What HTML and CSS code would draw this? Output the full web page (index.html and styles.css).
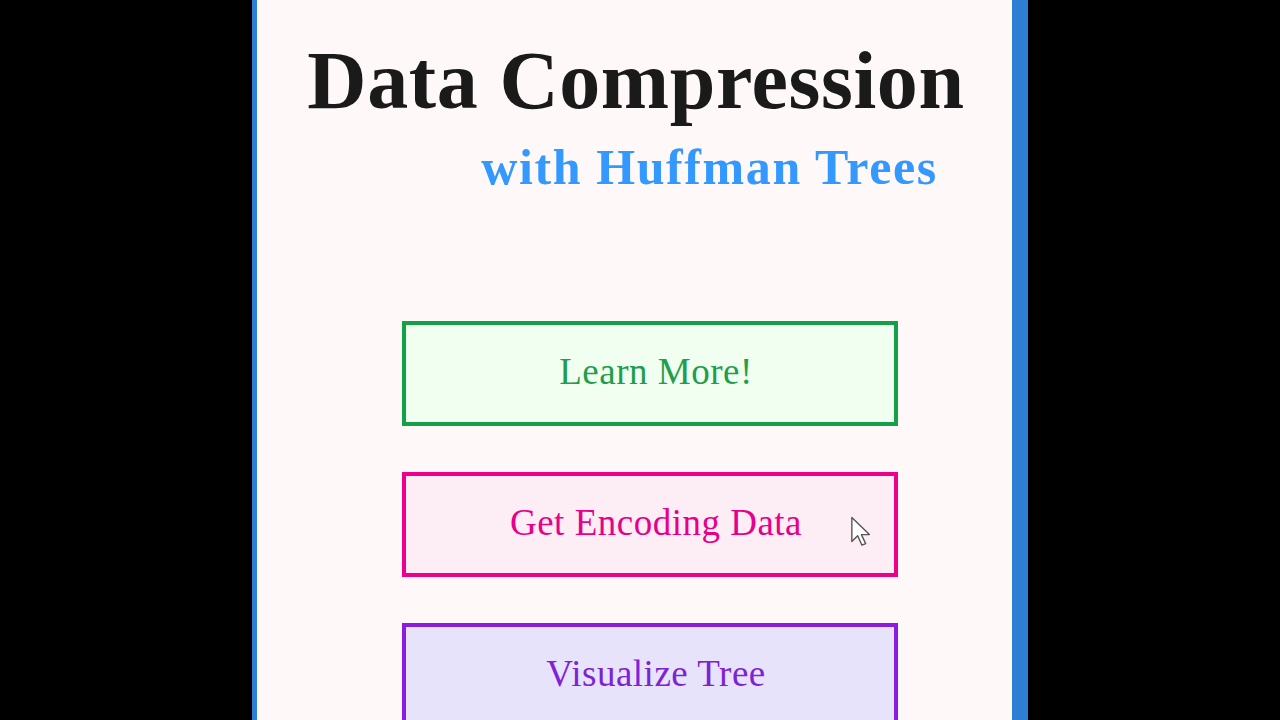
FILE: index.html
```html
<!DOCTYPE html>
<html>
<head>
<meta charset="utf-8">
<link rel="stylesheet" href="styles.css">
</head>
<body>
<div class="panel">
  <h1 class="title">Data Compression</h1>
  <h2 class="subtitle">with Huffman Trees</h2>
  <div class="buttons">
    <div class="btn btn-green">Learn More!</div>
    <div class="btn btn-pink">Get Encoding Data</div>
    <div class="btn btn-purple">Visualize Tree</div>
  </div>
</div>
<svg class="cursor" width="26" height="34" viewBox="0 0 24 32">
  <path d="M1.5 1.5 L1.5 24 L7 18.5 L11 27.5 L14.5 26 L10.5 17.5 L18 17.5 Z" fill="#ffffff" stroke="#555555" stroke-width="1.3" stroke-linejoin="round"/>
</svg>
</body>
</html>
```
FILE: styles.css
```css
html, body {
  margin: 0;
  padding: 0;
  background: #000000;
  height: 720px;
  overflow: hidden;
}
.panel {
  width: 755px;
  margin: 0 auto;
  height: 720px;
  background: #fff8f8;
  border-left: 5px solid #2c7fd3;
  border-right: 16px solid #2c7fd3;
  box-sizing: content-box;
  font-family: "Liberation Serif", "Times New Roman", serif;
}
.title {
  margin: 0;
  padding-top: 36px;
  padding-left: 3px;
  text-align: center;
  font-size: 82px;
  font-weight: bold;
  letter-spacing: 0.6px;
  color: #1a1a1a;
  line-height: 90px;
}
.subtitle {
  margin: 0;
  padding-top: 11px;
  padding-left: 150px;
  text-align: center;
  font-size: 50px;
  font-weight: bold;
  letter-spacing: 1.6px;
  color: #3399ff;
  line-height: 60px;
}
.buttons {
  display: flex;
  flex-direction: column;
  align-items: center;
  gap: 46px;
  padding-top: 124px;
  padding-left: 30px;
}
.btn {
  width: 475px;
  height: 93px;
  display: flex;
  align-items: center;
  justify-content: center;
  font-size: 37px;
  letter-spacing: 0.5px;
  padding-left: 13px;
  padding-bottom: 4px;
  box-sizing: content-box;
}
.btn-green {
  border: 4px solid #14a048;
  background: #f0fff0;
  color: #1f9e4c;
}
.btn-pink {
  border: 4px solid #ec008c;
  background: #fdeef6;
  color: #e6008a;
}
.btn-purple {
  border: 4px solid #8a1be0;
  background: #e6e3fa;
  color: #7f22d6;
}
.cursor {
  position: absolute;
  left: 850px;
  top: 516px;
}
```
